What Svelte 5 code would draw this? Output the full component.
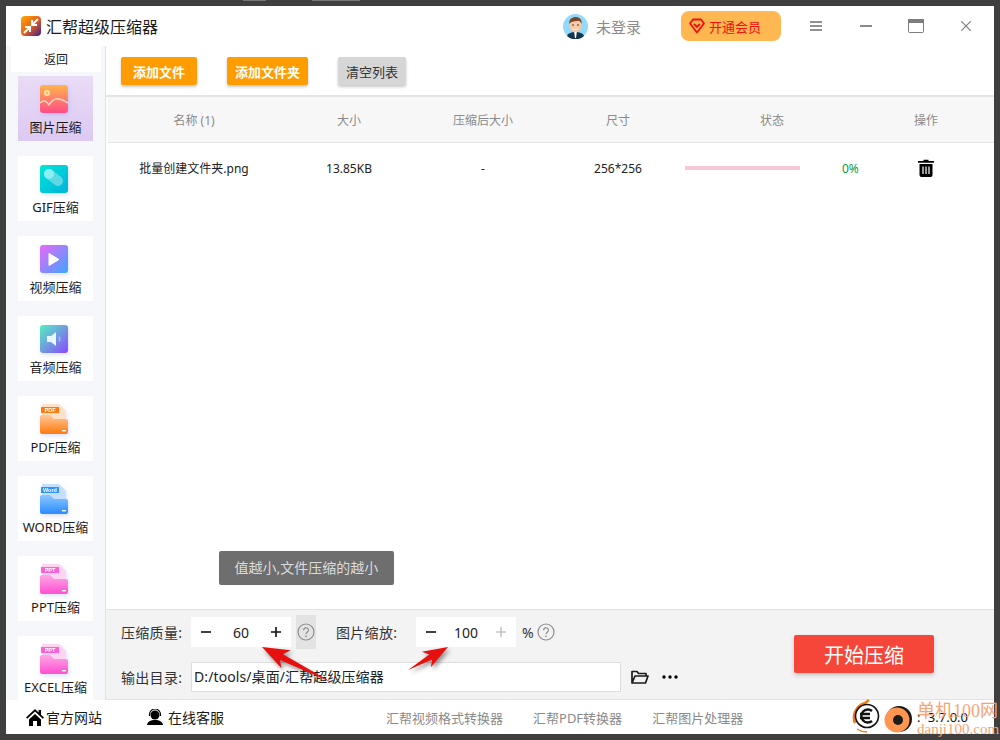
<script>
  const tools = [
    { id: 'image', label: '图片压缩', active: true },
    { id: 'gif', label: 'GIF压缩' },
    { id: 'video', label: '视频压缩' },
    { id: 'audio', label: '音频压缩' },
    { id: 'pdf', label: 'PDF压缩', tag: 'PDF', tagColor: '#ff7a0a', top: '#ffe0c8', from: '#ffc79a', to: '#ff7a0a' },
    { id: 'word', label: 'WORD压缩', tag: 'Word', tagColor: '#2f93ff', top: '#c5e0ff', from: '#8cc6ff', to: '#2a8dff' },
    { id: 'ppt', label: 'PPT压缩', tag: 'PPT', tagColor: '#ff5fd2', top: '#ffd3f2', from: '#ffa6e6', to: '#ff4fcf' },
    { id: 'excel', label: 'EXCEL压缩', tag: 'PPT', tagColor: '#ff5fd2', top: '#ffd3f2', from: '#ffa6e6', to: '#ff4fcf' }
  ]
  const columns = ['名称 (1)', '大小', '压缩后大小', '尺寸', '状态', '操作']
  const links = ['汇帮视频格式转换器', '汇帮PDF转换器', '汇帮图片处理器']
</script>

{#snippet help()}
  <svg class="help" width="18" height="18" viewBox="0 0 18 18">
    <circle cx="9" cy="9" r="8" fill="none" stroke="#8d8d8d" stroke-width="1.2" />
    <path d="M6.6 7.2a2.4 2.4 0 1 1 3.7 2c-.9.6-1.3 1-1.3 2" fill="none" stroke="#8d8d8d" stroke-width="1.2" />
    <circle cx="9" cy="13.4" r=".8" fill="#8d8d8d" />
  </svg>
{/snippet}

{#snippet stepper(value, plusColor)}
  <div class="stepper">
    <svg width="30" height="30" viewBox="0 0 30 30"><path d="M10 15h10" stroke="#111" stroke-width="1.6" /></svg>
    <span class="value">{value}</span>
    <svg width="30" height="30" viewBox="0 0 30 30"><path d="M10 15h10M15 10v10" stroke={plusColor} stroke-width="1.6" /></svg>
  </div>
{/snippet}

{#snippet toolIcon(tool)}
  <svg class="tool-icon" width="32" height="32" viewBox="0 0 32 32">
    <defs>
      <linearGradient id="g-image" x1="0" y1="0" x2="0" y2="1"><stop offset="0" stop-color="#ffb44c" /><stop offset="1" stop-color="#ff4c86" /></linearGradient>
      <linearGradient id="g-gif" x1="0" y1="0" x2="1" y2="1"><stop offset="0" stop-color="#00e6d6" /><stop offset="1" stop-color="#00b2dc" /></linearGradient>
      <linearGradient id="g-video" x1="0" y1="0" x2="1" y2="1"><stop offset="0" stop-color="#ec66f6" /><stop offset="1" stop-color="#3ba6ff" /></linearGradient>
      <linearGradient id="g-audio" x1="0" y1="0" x2="1" y2="1"><stop offset="0" stop-color="#55f0c0" /><stop offset="1" stop-color="#8a48ff" /></linearGradient>
      {#if tool.tag}
        <linearGradient id={'g-' + tool.id} x1="0" y1="0" x2="0" y2="1"><stop offset="0" stop-color={tool.from} /><stop offset="1" stop-color={tool.to} /></linearGradient>
      {/if}
    </defs>
    {#if tool.tag}
      <path d="M4 1h17l7 7v12H4z" fill={tool.top} />
      <path d="M2 14a2 2 0 0 1 2-2h8l4 4h12a2 2 0 0 1 2 2v11a2 2 0 0 1-2 2H4a2 2 0 0 1-2-2z" fill={'url(#g-' + tool.id + ')'} />
      <rect x="3" y="4" width="18" height="6" fill={tool.tagColor} />
      <text x="12" y="9" text-anchor="middle" class="tag">{tool.tag}</text>
      <rect x="24" y="27" width="4" height="1.4" fill="#fff" />
    {:else}
      <rect x="2" y="2" width="28" height="28" rx="3" fill={'url(#g-' + tool.id + ')'} />
      {#if tool.id === 'image'}
        <circle cx="9" cy="10" r="3" fill="#ffe3a8" />
        <circle cx="9" cy="10" r="1.2" fill="#ffb44c" />
        <path d="M2 20c3-3 6-3 9 2 3-5 6-7 10-6 4 .6 6 2 9 4" fill="none" stroke="#ffd9c4" stroke-width="1.4" />
      {:else if tool.id === 'gif'}
        <path d="M11 11l9 7" stroke="#5fd8e6" stroke-width="10" stroke-linecap="round" />
        <circle cx="11" cy="11" r="5" fill="#8aeef2" />
      {:else if tool.id === 'video'}
        <path d="M11 10.5l10 6-10 6z" fill="#fff" stroke="#fff" stroke-width="1" stroke-linejoin="round" />
      {:else if tool.id === 'audio'}
        <path d="M9 13h4l5-4v14l-5-4H9z" fill="#e8f6ff" />
        <path d="M21 13.500c1 1.500 1 3.500 0 5" fill="none" stroke="#b9b5ff" stroke-width="1.300" />
      {/if}
    {/if}
  </svg>
{/snippet}

<div class="stray one"></div>
<div class="stray two"></div>

<div class="win">
  <header class="title">
    <svg class="logo" width="20" height="20" viewBox="0 0 20 20">
      <defs>
        <linearGradient id="g-logo" x1="0" y1="0" x2="1" y2="1"><stop offset="0" stop-color="#ffa800" /><stop offset=".5" stop-color="#e8641a" /><stop offset="1" stop-color="#3c1a8c" /></linearGradient>
      </defs>
      <rect width="20" height="20" rx="4" fill="url(#g-logo)" />
      <path d="M17 3l-5.500 5.500M11 4v5h5M3 17l5.500-5.500M4 11h5v5" fill="none" stroke="#fff" stroke-width="2" />
    </svg>
    <span class="app-name">汇帮超级压缩器</span>

    <svg class="avatar" width="25" height="25" viewBox="0 0 25 25">
      <circle cx="12.500" cy="12.500" r="12.500" fill="#92d9fa" />
      <path d="M4 22c1-3 5-4 8.500-4s7.500 1 8.500 4a12.500 12.500 0 0 1-17 0z" fill="#17344f" />
      <path d="M11 17h3l-1 7h-1z" fill="#fff" />
      <ellipse cx="12.500" cy="11.500" rx="6" ry="6.800" fill="#f6c9a6" />
      <path d="M6.300 10c-.6-5 3-7 6.400-7s6.500 2 5.900 7c-.7-2-2-3-3.500-3.200-2.500.5-6.800.4-8.800 3.200z" fill="#7b4529" />
      <path d="M9 13.500c1.500 2 5.500 2 7 0-.6 3-6.400 3-7 0z" fill="#fff" />
      <circle cx="10" cy="11" r=".8" fill="#3a2418" />
      <circle cx="15" cy="11" r=".8" fill="#3a2418" />
    </svg>
    <span class="login">未登录</span>

    <div class="vip">
      <svg width="16" height="16" viewBox="0 0 16 16">
        <path d="M4 1.500h8l3 4-7 9-7-9z" fill="none" stroke="#f40d0d" stroke-width="1.800" stroke-linejoin="round" />
        <path d="M5 6l3 3 3-3" fill="none" stroke="#f40d0d" stroke-width="1.800" />
      </svg>
      <span>开通会员</span>
    </div>

    <svg class="menu" width="12" height="10" viewBox="0 0 12 10"><path d="M0 1h12M0 5h12M0 9h12" stroke="#6f6f6f" stroke-width="1.700" /></svg>
    <svg class="min" width="12" height="2" viewBox="0 0 12 2"><path d="M0 1h12" stroke="#8a8a8a" stroke-width="2" /></svg>
    <svg class="max" width="16" height="14" viewBox="0 0 16 14"><rect x=".5" y=".5" width="15" height="13" rx="1" fill="#fff" stroke="#7d7d7d" /><rect x="0" y="0" width="16" height="4" fill="#7d7d7d" /></svg>
    <svg class="close" width="10" height="10" viewBox="0 0 10 10"><path d="M.3.300l9.400 9.400M9.700.300L.3 9.700" stroke="#7d7d7d" stroke-width="1.200" /></svg>
  </header>

  <div class="mid">
    <aside class="side">
      <div class="back">返回</div>
      {#each tools as tool}
        <div class="tool" class:active={tool.active}>
          {@render toolIcon(tool)}
          <span>{tool.label}</span>
        </div>
      {/each}
    </aside>

    <main class="main">
      <div class="toolbar">
        <button class="orange first">添加文件</button>
        <button class="orange folder">添加文件夹</button>
        <button class="gray">清空列表</button>
      </div>

      <div class="table">
        <div class="grid head">
          {#each columns as col}
            <span>{col}</span>
          {/each}
        </div>
        <div class="grid row">
          <span>批量创建文件夹.png</span>
          <span>13.85KB</span>
          <span>-</span>
          <span>256*256</span>
          <div class="status">
            <div class="bar"></div>
            <span class="pct">0%</span>
          </div>
          <span>
            <svg class="trash" width="16" height="18" viewBox="0 0 16 18">
              <path d="M5.500 2V.8h5V2H16v1.800H0V2z" fill="#000" />
              <path d="M1.500 5h13v11a2 2 0 0 1-2 2h-9a2 2 0 0 1-2-2z" fill="#000" />
              <path d="M5 7.500v7.500M8 7.500v7.500M11 7.500v7.500" stroke="#fff" stroke-width="1.200" />
            </svg>
          </span>
        </div>
        <div class="tooltip">值越小,文件压缩的越小</div>
      </div>

      <div class="panel">
        <div class="controls">
          <div class="line">
            <span class="label">压缩质量:</span>
            {@render stepper(60, '#111')}
            <div class="help-box">{@render help()}</div>
            <span class="label scale">图片缩放:</span>
            {@render stepper(100, '#c4c4c4')}
            <span class="percent">%</span>
            {@render help()}
          </div>
          <div class="line">
            <span class="label">输出目录:</span>
            <div class="path">D:/tools/桌面/汇帮超级压缩器</div>
            <svg class="open" width="18" height="14" viewBox="0 0 18 14">
              <path d="M1 13V1.500h5l1.500 2H15V6M1 13h13.500L17 6H4z" fill="none" stroke="#1b1b1b" stroke-width="1.700" stroke-linejoin="round" />
            </svg>
            <svg class="dots" width="16" height="4" viewBox="0 0 16 4"><circle cx="2" cy="2" r="1.700" /><circle cx="8" cy="2" r="1.700" /><circle cx="14" cy="2" r="1.700" /></svg>
          </div>
        </div>
        <button class="start">开始压缩</button>
      </div>
    </main>
  </div>

  <footer class="foot">
    <svg class="home" width="18" height="17" viewBox="0 0 18 17">
      <path d="M9 0L0 8.500l1.200 1.200L9 2.500l7.800 7.200L18 8.500l-3-2.800V1h-2.400v2.500z" fill="#000" />
      <path d="M3 10.500L9 5l6 5.500V17h-4v-5H7v5H3z" fill="#000" />
    </svg>
    <span class="foot-link">官方网站</span>
    <svg class="agent" width="16" height="16" viewBox="0 0 16 16">
      <circle cx="8" cy="6" r="4.500" fill="#000" />
      <path d="M2.500 7V5.500a5.500 5.500 0 0 1 11 0V7" fill="none" stroke="#000" stroke-width="1.200" />
      <path d="M0 16c.5-3.500 3.500-5 8-5s7.500 1.500 8 5z" fill="#000" />
    </svg>
    <span class="foot-link">在线客服</span>
    <div class="links">
      {#each links as link}
        <span>{link}</span>
      {/each}
    </div>
    <span class="version">: 3.7.0.0</span>
  </footer>
</div>

<svg class="arrows" width="1000" height="740" viewBox="0 0 1000 740">
  <polygon transform="translate(262 647) rotate(27)" points="0,0 27,-10 22,-3 79,0 22,3.500 27,10" fill="#e8100e" />
  <polygon transform="translate(448 647) rotate(150)" points="0,0 25,-9 20,-3 46,0 20,3 25,9" fill="#e8100e" />
</svg>

<div class="mark">
  <svg width="64" height="34" viewBox="0 0 64 34">
    <path d="M3 24a15 15 0 0 1 10-20l4-3" fill="none" stroke="#f47a12" stroke-width="2.500" />
    <path d="M5 30c3 2 7 3 10 3" fill="none" stroke="#f47a12" stroke-width="1.500" />
    <circle cx="15" cy="17" r="11.500" fill="#fff" stroke="#111" stroke-width="1.600" />
    <path d="M20 12a6.500 6.500 0 1 0 0 10M8 15h10M8 19h10" fill="none" stroke="#111" stroke-width="2.400" />
    <circle cx="47" cy="20" r="13" fill="#151515" />
    <circle cx="45" cy="21" r="12.500" fill="#ff9550" />
    <circle cx="46" cy="21" r="5" fill="#1c1c1c" />
  </svg>
  <div class="mark-text">
    <span class="cn">单机100网</span>
    <span class="en">danji100.com</span>
  </div>
</div>

<style>
  :global(body) {
    background: #3f3f3f;
    font-family: "Noto Sans", "Noto Sans CJK SC", sans-serif;
    overflow: hidden;
  }
  .stray {
    position: absolute;
    top: 0;
    height: 1px;
    background: #777;
  }
  .stray.one {
    left: 243px;
    width: 23px;
  }
  .stray.two {
    left: 312px;
    width: 48px;
  }
  .win {
    position: relative;
    margin: 6px;
    width: 988px;
    height: 728px;
    background: #fff;
    display: flex;
    flex-direction: column;
    color: #222;
    overflow: hidden;
  }
  .title {
    flex: 0 0 40px;
    display: flex;
    align-items: center;
    padding-left: 15px;
    box-sizing: border-box;
  }
  .app-name {
    margin-left: 5px;
    font-size: 16px;
    color: #1a1a1a;
    width: 517px;
  }
  .login {
    margin-left: 8px;
    font-size: 15px;
    color: #8a8a8a;
    width: 85px;
  }
  .vip {
    width: 100px;
    height: 30px;
    box-sizing: border-box;
    padding-left: 8px;
    background: #ffb851;
    border-radius: 8px;
    display: flex;
    align-items: center;
    gap: 4px;
    font-size: 13px;
    color: #f40d0d;
  }
  .menu {
    margin-left: 29px;
  }
  .min {
    margin-left: 38px;
  }
  .max {
    margin-left: 36px;
  }
  .close {
    margin-left: 37px;
  }
  .mid {
    flex: 1;
    min-height: 0;
    display: flex;
  }
  .side {
    flex: 0 0 99px;
    background: #f6f7fb;
    border-right: 1px solid #e2e2e2;
    overflow: hidden;
    display: flex;
    flex-direction: column;
    align-items: flex-start;
    gap: 15px;
  }
  .back {
    margin: 0 0 -11px 5px;
    flex: 0 0 26px;
    width: 90px;
    height: 26px;
    background: #fff;
    text-align: center;
    font-size: 12px;
    line-height: 28px;
    color: #222;
  }
  .tool {
    flex: 0 0 65px;
    margin-left: 12px;
    width: 75px;
    background: #fff;
    display: flex;
    flex-direction: column;
    align-items: center;
    font-size: 13px;
    line-height: 19px;
    color: #1a1a1a;
    white-space: nowrap;
    padding-top: 7px;
    box-sizing: border-box;
  }
  .tool.active {
    background: linear-gradient(#e9dcf6, #dcc9f2);
  }
  .tool-icon {
    filter: drop-shadow(1px 2px 2px rgba(120, 140, 255, 0.25));
    margin: 0 3px 3px 0;
    flex: none;
  }
  .tag {
    font-size: 5.500px;
    font-weight: 700;
    fill: #fff;
    font-family: "Liberation Sans", sans-serif;
  }
  .main {
    flex: 1;
    min-width: 0;
    display: flex;
    flex-direction: column;
  }
  .toolbar {
    flex: 0 0 51px;
    box-sizing: border-box;
    padding: 11px 0 0 15px;
    border-bottom: 2px solid #e4e4e4;
    display: flex;
    align-items: flex-start;
  }
  .toolbar button {
    height: 28px;
    border: 0;
    border-radius: 2px;
    padding: 0;
    font-family: inherit;
    font-size: 13px;
    box-shadow: 0 2px 3px rgba(0, 0, 0, 0.22);
  }
  .orange {
    background: #ff9c00;
    color: #fff;
    font-weight: 700;
  }
  .first {
    width: 76px;
  }
  .folder {
    width: 81px;
    margin-left: 30px;
  }
  .gray {
    width: 68px;
    margin-left: 30px;
    background: #d6d6d6;
    color: #333;
  }
  .table {
    position: relative;
    flex: 1;
    min-height: 0;
  }
  .grid {
    display: grid;
    grid-template-columns: 172px 138px 130px 140px 168px 138px;
    margin-left: 2px;
    text-align: center;
    align-items: center;
  }
  .grid > :last-child {
    padding-left: 2px;
  }
  .head {
    height: 46px;
    box-sizing: border-box;
    background: #f7f7f7;
    border-bottom: 1px solid #e4e4e4;
    font-size: 12px;
    color: #8a8a8a;
  }
  .row {
    height: 50px;
    font-size: 12px;
    color: #222;
  }
  .status {
    display: flex;
    align-items: center;
    margin-left: -3px;
  }
  .bar {
    flex: none;
    width: 115px;
    height: 4px;
    background: #f8c6d8;
  }
  .pct {
    margin-left: 42px;
    color: #0f9a3c;
  }
  .trash {
    display: block;
    margin: 0 auto;
  }
  .tooltip {
    position: absolute;
    left: 113px;
    top: 454px;
    width: 175px;
    height: 34px;
    background: #6e6e6e;
    border-radius: 2px;
    color: #dcdcdc;
    font-size: 14px;
    line-height: 34px;
    text-align: center;
  }
  .panel {
    flex: 0 0 91px;
    box-sizing: border-box;
    background: #f3f3f3;
    border-top: 1px solid #e2e2e2;
    border-bottom: 1px solid #e2e2e2;
    padding-left: 15px;
    display: flex;
  }
  .controls {
    width: 560px;
    padding-top: 7px;
    display: flex;
    flex-direction: column;
    gap: 15px;
  }
  .line {
    height: 30px;
    display: flex;
    align-items: center;
  }
  .label {
    width: 70px;
    flex: none;
    font-size: 14px;
    color: #333;
    letter-spacing: 0.3px;
  }
  .label.scale {
    width: 80px;
    margin-left: 20px;
  }
  .stepper {
    width: 100px;
    height: 30px;
    background: #fff;
    display: flex;
    align-items: center;
    flex: none;
  }
  .value {
    width: 40px;
    text-align: center;
    font-size: 14px;
    color: #222;
  }
  .help-box {
    margin-left: 5px;
    width: 20px;
    height: 34px;
    background: #e3e3e3;
    display: flex;
    align-items: center;
    justify-content: center;
    flex: none;
  }
  .percent {
    margin: 0 3px 0 6px;
    font-size: 14px;
    color: #333;
  }
  .path {
    width: 430px;
    height: 30px;
    box-sizing: border-box;
    background: #fff;
    border: 1px solid #dedede;
    padding-left: 2px;
    font-size: 14px;
    line-height: 28px;
    color: #222;
    letter-spacing: 0.1px;
    flex: none;
  }
  .open {
    margin-left: 10px;
  }
  .dots {
    margin-left: 13px;
  }
  .start {
    width: 140px;
    height: 38px;
    margin: 25px 0 0 113px;
    border: 0;
    border-radius: 2px;
    background: #f64639;
    color: #fff;
    font-family: inherit;
    font-size: 20px;
    padding: 0;
    box-shadow: 0 2px 4px rgba(0, 0, 0, 0.2);
  }
  .foot {
    flex: 0 0 34px;
    box-sizing: border-box;
    display: flex;
    align-items: center;
    padding-left: 20px;
  }
  .foot-link {
    font-size: 14px;
    color: #1a1a1a;
  }
  .home {
    margin-right: 2px;
  }
  .agent {
    margin: 0 5px 0 45px;
  }
  .links {
    margin-left: 162px;
    display: flex;
    gap: 30px;
    font-size: 13px;
    color: #8a8a8a;
  }
  .version {
    margin-left: auto;
    padding-right: 26px;
    font-size: 13px;
    color: #111;
    word-spacing: 4px;
  }
  .arrows {
    position: absolute;
    left: 0;
    top: 0;
    pointer-events: none;
    filter: drop-shadow(2px 3px 2px rgba(0, 0, 0, 0.4));
  }
  .mark {
    position: absolute;
    left: 852px;
    top: 699px;
    width: 148px;
    height: 41px;
    overflow: hidden;
    pointer-events: none;
  }
  .mark-text {
    position: absolute;
    left: 65px;
    top: 1px;
    display: flex;
    flex-direction: column;
    font-family: "Liberation Serif", "Noto Sans CJK SC", serif;
    color: #f6a474;
    white-space: nowrap;
  }
  .cn {
    font-size: 18px;
    line-height: 22px;
  }
  .en {
    font-size: 15px;
    line-height: 15px;
  }
</style>
